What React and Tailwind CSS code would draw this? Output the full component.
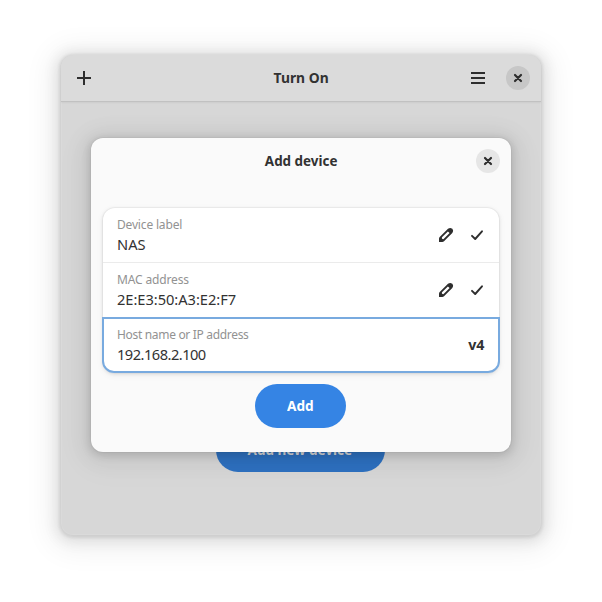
import React from "react";

function CloseIcon() {
  return (
    <svg width="16" height="16" viewBox="0 0 16 16" fill="none" stroke="#2e2e2e" strokeWidth="2.2" strokeLinecap="round">
      <path d="M5 5l6 6M11 5l-6 6" />
    </svg>
  );
}

function PencilIcon() {
  return (
    <svg width="16" height="16" viewBox="0 0 16 16" fill="#2e2e2e">
      <path
        fillRule="evenodd"
        d="M10 1.7Q11 .9 12.4 .9 15 1.1 15.1 3.6 15.1 5 14.3 6L6 14.3Q5.300 15 4.300 15H1v-3.300Q1 10.700 1.700 10zM9.900 4.400L4 10.300Q3.600 10.900 4.100 11.700 4.900 12.400 5.600 12L11.600 6z"
      />
    </svg>
  );
}

function CheckIcon() {
  return (
    <svg width="16" height="16" viewBox="0 0 16 16" fill="none" stroke="#2e2e2e" strokeWidth="1.9" strokeLinecap="round" strokeLinejoin="round">
      <path d="M3 8.800l3.200 3.200L13 4.300" />
    </svg>
  );
}

function Labels({ label, value, labelClass, valueClass }) {
  return (
    <div className="flex flex-col whitespace-nowrap">
      <span className={"h-[20px] text-[12px] leading-[19px] text-[#929292] " + labelClass}>{label}</span>
      <span className={"h-[20px] text-[14.67px] leading-[18px] text-[#323232] " + valueClass}>{value}</span>
    </div>
  );
}

function EntryRow({ className, ...labels }) {
  return (
    <div className={"flex items-center justify-between px-3.5 " + className}>
      <Labels {...labels} />
      <div className="flex items-center gap-[15px]">
        <PencilIcon />
        <CheckIcon />
      </div>
    </div>
  );
}

export default function App() {
  return (
    <div className="h-screen w-screen overflow-hidden bg-white pl-[61px] pt-[55px] font-['Noto_Sans',sans-serif] text-[14.67px] text-[#323232]">
      <div className="relative flex h-[480px] w-[480px] flex-col rounded-xl bg-[#d7d7d7] shadow-[inset_0_0_0_1px_rgba(255,255,255,0.08),0_1px_3px_2px_rgba(0,0,0,0.08),0_2px_14px_5px_rgba(0,0,0,0.09),0_4px_28px_12px_rgba(0,0,0,0.06)]">
        <header className="grid h-[47px] shrink-0 grid-cols-[1fr_auto_1fr] items-center rounded-t-xl border-b border-[#c1c1c1] bg-[#dbdbdb] pl-[15px] pr-[11px] shadow-[0_1px_2px_rgba(0,0,0,0.05)]">
          <svg width="16" height="16" viewBox="0 0 16 16" fill="#2e2e2e">
            <path d="M7 1h2v6h6v2H9v6H7V9H1V7h6z" />
          </svg>
          <h1 className="-ml-1 scale-x-[0.945] pb-0.5 font-bold">Turn On</h1>
          <div className="flex items-center justify-end gap-5">
            <svg width="16" height="16" viewBox="0 0 16 16" fill="#2e2e2e">
              <path d="M1 2h14v2H1zM1 7h14v2H1zM1 12h14v2H1z" />
            </svg>
            <button className="flex size-6 items-center justify-center rounded-full bg-[#c7c7c7]">
              <CloseIcon />
            </button>
          </div>
        </header>
        <main className="flex flex-1 flex-col items-center justify-end pb-[63px] pr-[1px]">
          <button className="flex h-11 w-[169px] items-center justify-center rounded-full bg-[#2e71c1] pb-0.5 pr-px font-bold text-[#d7d7d7]">
            <span className="scale-x-[0.92] whitespace-nowrap">Add new device</span>
          </button>
        </main>

        <section className="absolute left-[30px] top-[83px] flex h-[314px] w-[420px] flex-col items-center rounded-xl bg-[#fafafa] shadow-[0_0_0_1px_rgba(0,0,0,0.03),0_2px_8px_2px_rgba(0,0,0,0.13),0_3px_20px_10px_rgba(0,0,0,0.05),0_6px_32px_16px_rgba(0,0,0,0.02)]">
          <div className="grid h-[46px] w-full grid-cols-[1fr_auto_1fr] items-center px-[11px]">
            <span />
            <h2 className="-translate-y-px translate-x-[0.5px] scale-x-[0.915] font-bold">Add device</h2>
            <button className="flex size-6 items-center justify-center justify-self-end rounded-full bg-[#e6e6e6]">
              <CloseIcon />
            </button>
          </div>
          <div className="mt-6 flex h-[165px] w-[396px] flex-col rounded-xl bg-white shadow-[0_0_0_1px_rgba(0,0,0,0.03),0_1px_3px_1px_rgba(0,0,0,0.07),0_2px_6px_2px_rgba(0,0,0,0.03)]">
            <EntryRow className="h-[55px] border-b border-[#ebebeb]" label="Device label" labelClass="tracking-[-0.17px]" value="NAS" valueClass="tracking-normal" />
            <EntryRow className="h-[54px]" label="MAC address" labelClass="tracking-[-0.15px]" value="2E:E3:50:A3:E2:F7" valueClass="tracking-[-0.04px]" />
            <div className="-mx-px flex h-14 items-center justify-between rounded-b-xl border-2 border-[#78aadf] pl-[13px] pr-[13px]">
              <Labels label="Host name or IP address" labelClass="tracking-[-0.32px]" value="192.168.2.100" valueClass="tracking-[-0.53px]" />
              <span className="-translate-y-px scale-x-[0.97] font-bold">v4</span>
            </div>
          </div>
          <button className="mr-px mt-[11px] flex h-11 w-[91px] items-center justify-center rounded-full bg-[#3584e4] pb-0.5 font-bold text-white">
            <span className="scale-x-[0.93]">Add</span>
          </button>
        </section>
      </div>
    </div>
  );
}
